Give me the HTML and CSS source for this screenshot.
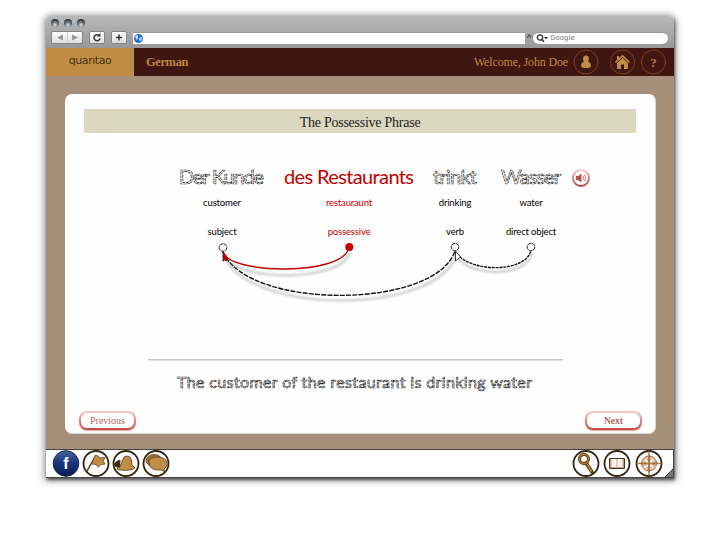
FILE: index.html
```html
<!DOCTYPE html>
<html lang="en">
<head>
<meta charset="utf-8">
<title>quantao - German</title>
<link rel="stylesheet" href="styles.css">
</head>
<body>
<div class="window">
  <div class="chrome">
    <div class="lights"><i></i><i></i><i></i></div>
    <div class="toolbar">
      <div class="btn nav"><svg width="32" height="13"><path d="M6 6.500L12 3.500V9.500ZM27 6.500L21 3.500V9.500Z" fill="#999"/><path d="M16.500 0V13" stroke="#ccc"/></svg></div>
      <div class="btn reload"><svg width="16" height="13"><path d="M10.500 5A3 3 0 1 0 11 7.500" fill="none" stroke="#333" stroke-width="1.500"/><path d="M8 5.500H11.500V2Z" fill="#333"/></svg></div>
      <div class="btn plus"><svg width="16" height="13"><path d="M5 6.500H11M8 3.500V9.500" stroke="#333" stroke-width="1.500"/></svg></div>
      <div class="address"><svg width="11" height="11"><circle cx="5.500" cy="5.500" r="4.500" fill="#2c6ccb"/><path d="M2 3L5 2L5 5L3.500 7ZM6.500 5L9 4L8 8L6 7Z" fill="#cfe5fa"/></svg></div>
      <span class="caret">^</span>
      <div class="search"><svg width="13" height="11"><circle cx="4" cy="4.500" r="2.700" fill="none" stroke="#333" stroke-width="1.300"/><path d="M6 6.500L8 9" stroke="#333" stroke-width="1.500"/><path d="M8 4H12L10 6.500Z" fill="#333"/></svg><span>Google</span></div>
    </div>
  </div>
  <header class="header">
    <div class="brand">quantao</div>
    <div class="course">German</div>
    <div class="welcome">Welcome, John Doe</div>
    <svg class="head-icons" width="94" height="26">
      <g fill="none" stroke="#804020"><circle cx="13" cy="13" r="12"/><circle cx="49.500" cy="13" r="12"/><circle cx="80.500" cy="13" r="12"/></g>
      <path d="M13 6.500C9.500 6.500 9.500 11 11 12.500Q8 13.500 8 17Q8 19 13 19T18 17Q18 13.500 15 12.500C16.500 11 16.500 6.500 13 6.500Z" fill="#c08d46"/>
      <path d="M41.800 13L49.500 5.800L57.200 13L56 14L49.500 8L43 14ZM44 14L49.500 9L55 14V20H51V15.500H48V20H44ZM44 7H46V10L44 11Z" fill="#c08d46"/>
      <text x="80.500" y="17.500" text-anchor="middle">?</text>
    </svg>
  </header>
  <main class="stage">
    <section class="card">
      <h1 class="title">The Possessive Phrase</h1>
      <div class="lesson">
        <div class="grid">
          <div class="word"><svg width="90" height="26"><text class="outline" x="2" y="20" textLength="85">Der Kunde</text></svg></div>
          <div class="word red"><svg width="132" height="26"><text x="1" y="20" textLength="130">des Restaurants</text></svg></div>
          <div class="word"><svg width="48" height="26"><text class="outline" x="2" y="20" textLength="44">trinkt</text></svg></div>
          <div class="word"><svg width="62" height="26"><text class="outline" x="1" y="20" textLength="60">Wasser</text></svg></div>
          <div class="gloss">customer</div><div class="gloss red">restauraunt</div><div class="gloss">drinking</div><div class="gloss">water</div>
          <div class="role">subject</div><div class="role red">possessive</div><div class="role">verb</div><div class="role">direct object</div>
        </div>
        <svg class="speaker" width="20" height="20">
          <defs><linearGradient id="ring" x2="0" y2="1"><stop stop-color="#f2c9c5"/><stop offset="1" stop-color="#bd4540"/></linearGradient></defs>
          <circle cx="10" cy="10" r="8" fill="#fff" stroke="url(#ring)" stroke-width="2"/>
          <path d="M5 8H7L10.500 5.500V14.500L7 12H5Z" fill="#bd5049"/><path d="M12 8Q13.500 10 12 12M13.500 6.500Q16 10 13.500 13.500" fill="none" stroke="#d47a74"/>
        </svg>
      </div>
      <svg class="arcs" width="406" height="70">
        <g class="shadow"><path d="M53 13C65 39 174 40 179 8M53 13C78 72 265 73 285 12M285 12C298 36 359 34 361 9"/></g>
        <g fill="none" stroke="#fff" stroke-width="1.600"><path d="M53 12C78 70 265 70 285 11"/><path d="M285 11C298 34 359 33 361 9"/></g>
        <path class="dash" d="M53 12C78 70 265 70 285 11"/>
        <path class="dash short" d="M285 11C298 34 359 33 361 9"/>
        <path d="M53 12C58 34 174 37 179 7" fill="none" stroke="#c00000" stroke-width="1.400"/>
        <path d="M53 11L59 19L53 21Z" fill="#c00000"/>
        <path d="M53 11V21L57 20" fill="none" stroke="#222" stroke-dasharray="3 1"/>
        <path d="M285.500 11V21L290.500 17Z" fill="#fff" stroke="#222" stroke-width=".9"/>
        <g fill="#fff" stroke="#222" stroke-dasharray="4 .5"><circle cx="53" cy="7.500" r="3.800"/><circle cx="285" cy="7" r="3.800"/><circle cx="361" cy="7" r="3.800"/></g>
        <circle cx="179.300" cy="7" r="4" fill="#c00000"/>
      </svg>
      <div class="rule"></div>
      <div class="translation"><svg width="360" height="28"><text class="outline" x="2" y="18" textLength="355">The customer of the restaurant is drinking water</text></svg></div>
      <div class="actions"><a class="pill previous"><span>Previous</span></a><a class="pill next"><span>Next</span></a></div>
    </section>
  </main>
  <footer class="footer">
    <svg width="120" height="28">
      <defs><linearGradient id="blue" x2="0" y2="1"><stop stop-color="#46639c"/><stop offset=".5" stop-color="#183477"/><stop offset="1" stop-color="#081c56"/></linearGradient></defs>
      <circle cx="14" cy="13.500" r="12.800" fill="url(#blue)" stroke="#15234c"/>
      <text class="fb" x="14" y="19" text-anchor="middle">f</text>
      <g class="rings"><circle cx="44" cy="13.500" r="12.500"/><circle cx="74" cy="13.500" r="12.500"/><circle cx="104" cy="13.500" r="12.500"/></g>
      <path d="M42 5L37 22" stroke="#60401b" stroke-width="1.500" transform="rotate(14 40 13)"/>
      <g fill="#c08d46" stroke="#60401b" stroke-width=".8">
        <path d="M43 5.500Q46 4.500 48 8L53 7.500L51 11L53 14Q48 14 46.500 17Q43 13 39.500 14Z"/>
        <path d="M72 7L75 6L78 7Q80 9 80 15L83 18Q81 20 77 20Q73 21 70 20L66 20L65 18Q70 16 70 11Z"/><path d="M68 10Q63 11 62 15Q64 18 68 17Z" fill="#372716"/>
        <ellipse cx="102" cy="10.500" rx="8" ry="6" fill="#9b6d38"/><path d="M97 12Q97 7 105 7Q115 7 115 14Q115 17 112 19L113 22L109 20Q97 21 97 12Z"/>
      </g>
    </svg>
    <svg width="92" height="28">
      <g class="rings"><circle cx="14" cy="13.500" r="12.500"/><circle cx="45" cy="13.500" r="12.500"/><circle cx="77" cy="13.500" r="12.500"/></g>
      <path d="M14 13L20 22" stroke="#49300f" stroke-width="3.500" stroke-linecap="round"/><circle cx="12" cy="9" r="4.500" fill="none" stroke="#49300f" stroke-width="3"/>
      <circle cx="12" cy="9" r="4.500" fill="none" stroke="#b57a2a" stroke-width="1.500"/><path d="M15 14L20 22" stroke="#c08d46" stroke-width="1.500"/>
      <path d="M37.500 8.500H52.500V18.500H37.500Z" fill="#c99d87" stroke="#493024"/><path d="M39.500 9H44.500V17H39.500ZM45.500 9H50.500V17H45.500Z" fill="#fff3e9"/>
      <circle cx="77" cy="13.500" r="7.500" fill="#e2c3ac" stroke="#a97045"/>
      <path d="M77 1L78 12.500L90 13.500L78 14.500L77 26L76 14.500L64 13.500L76 12.500Z" fill="#b98043" stroke="#8e602d" stroke-width=".6"/>
      <path d="M72 8.500L76 11V12.500H74ZM82 8.500L78 11V12.500H80ZM72 18.500L76 16V14.500H74ZM82 18.500L78 16V14.500H80Z" fill="#fff6eb"/>
    </svg>
    <svg class="grip" width="8" height="8"><path d="M8 0V8H0Z" fill="#777"/><path d="M8 0L0 8" stroke="#333"/></svg>
  </footer>
</div>
</body>
</html>
```
FILE: styles.css
```css
* { box-sizing: border-box; }
body { margin: 0; width: 720px; height: 540px; padding: 16px 46px; overflow: hidden; background: #fff; font-family: Lato, "Liberation Sans", sans-serif; }
svg { display: block; flex: none; }
.window { width: 628px; height: 462px; border-radius: 5px 5px 0 0; box-shadow: 0 1px 7px 2px rgba(0,0,0,.4), 1px 2px 3px rgba(0,0,0,.5); }
.chrome { height: 32px; padding: 3px 5px 0; border-radius: 5px 5px 0 0; background: linear-gradient(#b9b9b9, #989898); }
.lights { display: flex; gap: 5px; height: 12px; }
.lights i { width: 8px; height: 8px; border-radius: 50%; background: radial-gradient(circle at 50% 75%, #e4ecf2 0, #7d858c 35%, #25282b 80%); }
.toolbar { display: flex; align-items: center; height: 13px; }
.btn { height: 13px; border: 1px solid #858585; border-radius: 2px; background: linear-gradient(#fff, #ddd); overflow: hidden; }
.btn svg { margin: -1px; }
.nav { width: 32px; margin-right: 6px; }
.reload { width: 16px; margin-right: 6px; }
.plus { width: 16px; margin-right: 6px; }
.address { width: 392px; height: 12px; background: #fff; border-top: 1px solid #999; }
.caret { width: 8px; text-align: center; font: bold 8px/12px "Liberation Sans", sans-serif; color: #333; }
.search { display: flex; align-items: center; width: 135px; height: 12px; padding-left: 3px; border-radius: 6px; border-top: 1px solid #999; background: #fff; color: #777; font: 7px/11px "DejaVu Sans", sans-serif; }
.search span { margin-left: 1px; }
.header { display: flex; align-items: center; height: 28px; background: #401610; color: #bd8845; font-family: "Liberation Serif", serif; }
.brand { width: 88px; height: 28px; background: #c08d46; color: #49300f; text-align: center; font: 11px/26px "DejaVu Sans", sans-serif; letter-spacing: -.4px; }
.course { width: 80px; padding-left: 12px; font: bold 12.500px/28px "Liberation Serif", serif; letter-spacing: -.4px; }
.welcome { margin-left: auto; margin-right: 5px; font-size: 12px; white-space: nowrap; letter-spacing: -.15px; }
.head-icons { margin-right: 7px; }
.head-icons text { font: bold 13px "Liberation Serif", serif; fill: #ae783b; }
.stage { height: 373px; padding: 18px 18px 0 19px; background: #a58f7a; }
.card { width: 591px; height: 340px; padding-top: 15px; border-radius: 7px; background: #fefefe; border: 1px solid #ddd6ce; border-width: 0 1px 1px 0; }
.title { width: 552px; height: 24px; margin: 0 0 0 19px; background: #dcd8c0; color: #222; text-align: center; font: 14px/27px "Liberation Serif", serif; letter-spacing: -.25px; }
.lesson { display: flex; height: 107px; padding: 31px 0 0 105px; }
.grid { display: grid; grid-template-columns: 104px 150px 62px 90px; grid-template-rows: 32px 25px 18px; width: 406px; }
.word { display: flex; justify-content: center; }
.word text { font: 20px Lato, sans-serif; }
.red { color: #c00000; fill: #c00000; }
.outline { fill: #fff; stroke: #111; stroke-width: .7px; stroke-dasharray: 3 .7; }
.gloss, .role { text-align: center; font-size: 9.500px; line-height: 12px; white-space: nowrap; letter-spacing: -.15px; }
.gloss { padding-top: 1px; }
.role { padding-top: 5px; }
.speaker { margin-left: -5px; margin-top: 4px; }
.arcs { margin-left: 105px; }
.shadow { fill: none; stroke: #777; stroke-width: 2.500px; opacity: .35; filter: blur(1px); transform: translate(1px, 3px); }
.dash { fill: none; stroke: #111; stroke-width: 1.400px; stroke-dasharray: 5 1.200; }
.short { stroke-dasharray: 3 .8; }
.rule { width: 415px; height: 1px; margin: 49px 0 0 83px; background: #c2c2c2; box-shadow: 0 1px 1px #ddd; }
.translation { height: 51px; padding: 10px 0 0 110px; }
.translation text { font: 16px Lato, sans-serif; fill: #ddd; stroke-width: .65px; }
.actions { display: flex; justify-content: space-between; padding: 0 13px 0 14px; }
.pill { display: block; width: 57px; height: 19px; padding: 2px; border-radius: 8px; background: linear-gradient(#f5ccc8, #c44740); box-shadow: 0 1px 1px #e0aaa6; text-align: center; }
.pill span { display: block; height: 15px; border-radius: 6px; background: #fff; color: #b7655e; font: 10px/16px "Liberation Serif", serif; }
.next span { font-weight: bold; font-size: 9.500px; }
.footer { display: flex; position: relative; height: 29px; padding: 0 9px 0 6px; justify-content: space-between; background: #fff; border: 1px solid #444; border-width: 1px 1px 1px 0; }
.rings { fill: none; stroke: #33230f; stroke-width: 1.800px; }
.fb { font: bold 16px "Liberation Sans", sans-serif; fill: #fff; }
.grip { position: absolute; right: 0; bottom: 0; }
```
